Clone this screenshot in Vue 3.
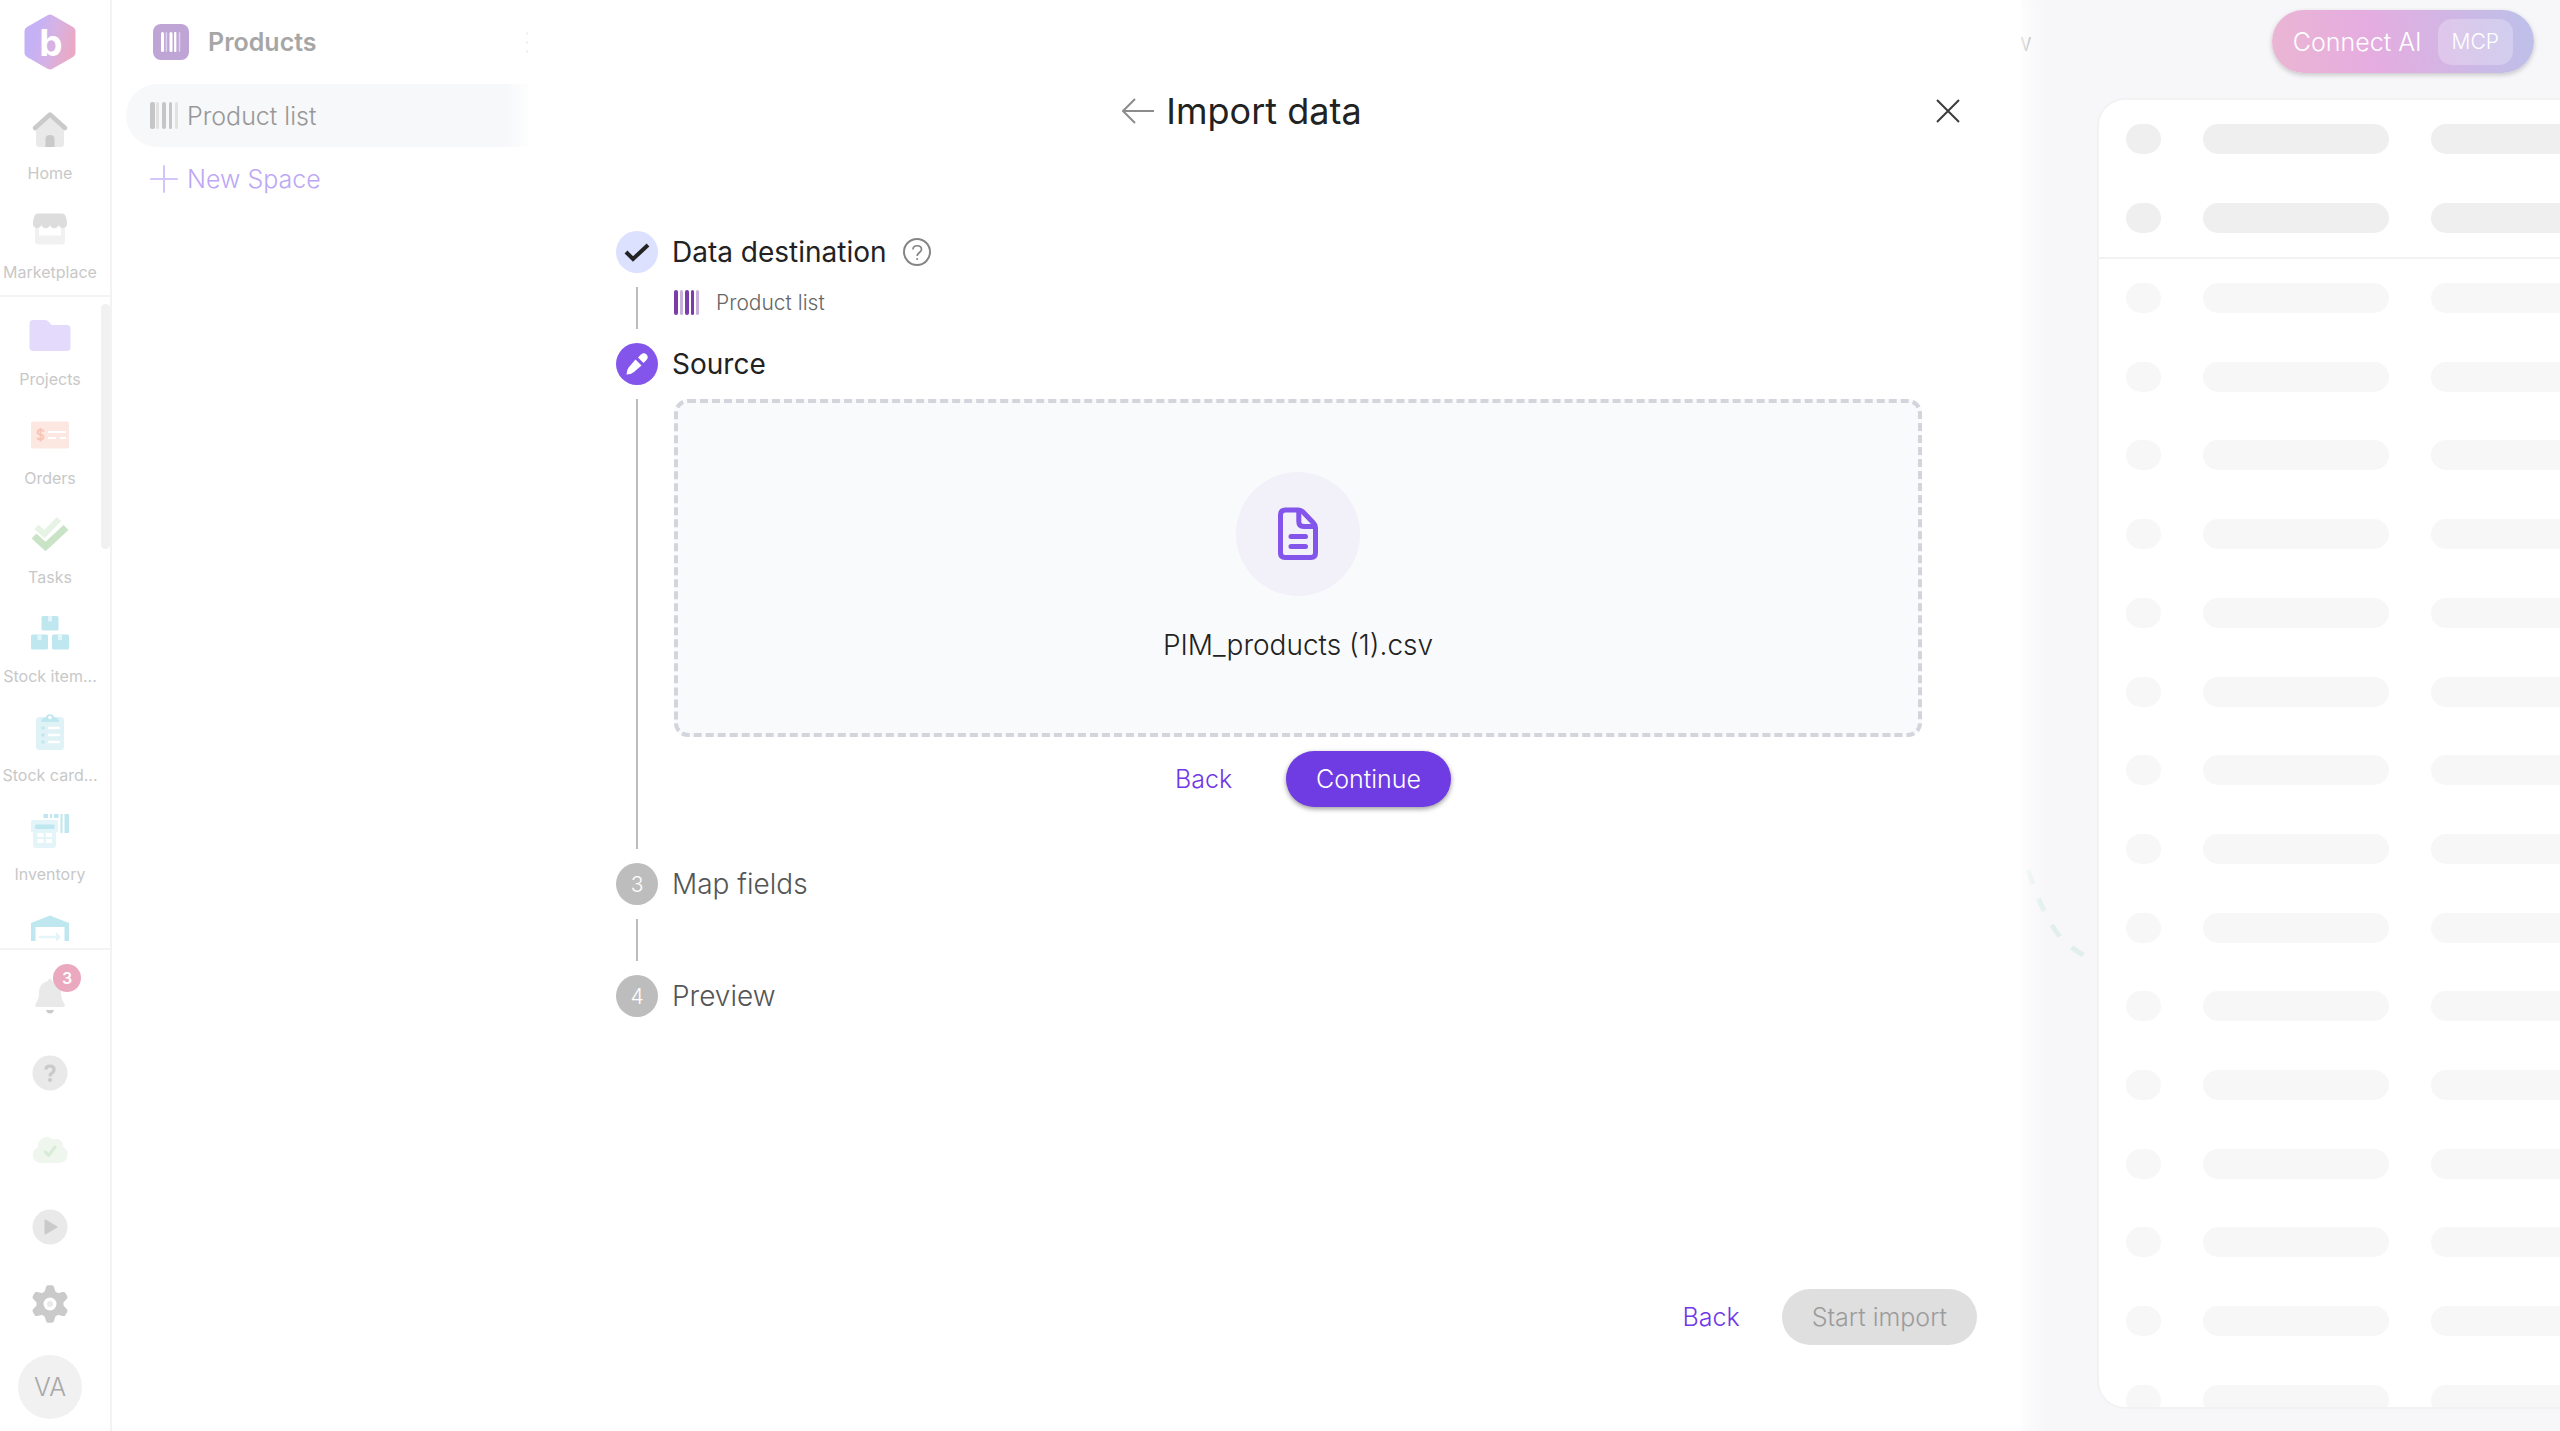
<template>
  <div class="page">
    <!-- App rail -->
    <aside class="rail">
      <a href="#" class="logo" aria-label="Start page">
        <svg width="52" height="56" viewBox="0 0 52 56">
          <defs>
            <linearGradient id="logo-fill" x1="0" y1="0.3" x2="1" y2="0.6">
              <stop offset="0.2" stop-color="#c5b1f6" />
              <stop offset="0.55" stop-color="#d6b2e4" />
              <stop offset="0.95" stop-color="#eaa9c4" />
            </linearGradient>
          </defs>
          <path
            d="M23.500 1.200Q26 -0.300 28.500 1.200L49 13Q51.500 14.500 51.500 17V39Q51.500 41.500 49 43L28.500 54.800Q26 56.300 23.500 54.800L3 43Q0.500 41.500 0.500 39V17Q0.500 14.500 3 13Z"
            fill="url(#logo-fill)"
          />
          <text x="27" y="42" text-anchor="middle" class="logo-letter">b</text>
        </svg>
      </a>

      <nav class="rail-top">
        <a v-for="item in topItems" :key="item.label" href="#" class="rail-item">
          <svg class="rail-icon" viewBox="0 0 44 44" v-html="item.icon"></svg>
          <span class="rail-label">{{ item.label }}</span>
        </a>
      </nav>

      <nav class="rail-scroll">
        <a v-for="(item, index) in appItems" :key="index" href="#" class="rail-item">
          <svg class="rail-icon" viewBox="0 0 44 44" v-html="item.icon"></svg>
          <span v-if="item.label" class="rail-label">{{ item.label }}</span>
        </a>
        <span class="scroll-thumb"></span>
      </nav>

      <div class="rail-bottom">
        <button
          v-for="tool in tools"
          :key="tool.name"
          type="button"
          class="tool"
          :aria-label="tool.name"
        >
          <svg class="rail-icon" viewBox="0 0 44 44" v-html="tool.icon"></svg>
          <span v-if="tool.badge" class="badge">{{ tool.badge }}</span>
        </button>
        <button type="button" class="avatar">VA</button>
      </div>
    </aside>

    <!-- Space panel -->
    <aside class="panel">
      <div class="panel-head">
        <span class="panel-logo">
          <svg width="20" height="20" viewBox="0 0 26 26" fill="#fff">
            <rect x="0" width="4" height="26" rx="2" />
            <rect x="6" width="2" height="26" rx="1" opacity="0.5" />
            <rect x="11" width="4" height="26" rx="2" />
            <rect x="17" width="3" height="26" rx="1" />
            <rect x="23" width="2" height="26" rx="1" opacity="0.5" />
          </svg>
        </span>
        <span class="panel-title">Products</span>
        <button type="button" class="panel-more" aria-label="More">
          <i></i><i></i><i></i>
        </button>
      </div>
      <a href="#" class="space active">
        <svg width="28" height="28" viewBox="0 0 28 28">
          <g fill="#c6c6c6">
            <rect x="0" y="0" width="5" height="27" rx="2" />
            <rect x="12" y="0" width="4" height="27" rx="2" />
            <rect x="19" y="0" width="3" height="27" rx="1.500" />
          </g>
          <g fill="#e2e2e2">
            <rect x="6" y="0" width="3" height="27" rx="1.500" />
            <rect x="25" y="0" width="3" height="27" rx="1.500" />
          </g>
        </svg>
        Product list
      </a>
      <a href="#" class="space add">
        <svg width="28" height="28" viewBox="0 0 28 28">
          <path d="M14 1V27M1 14H27" stroke="#d5c6f9" stroke-width="2" stroke-linecap="round" />
        </svg>
        New Space
      </a>
    </aside>

    <!-- Page behind the dialog -->
    <main class="main">
      <header class="topbar">
        <span class="topbar-tab">w</span>
        <button type="button" class="connect">
          Connect AI
          <span class="connect-tag">MCP</span>
        </button>
      </header>
      <div class="board">
        <svg class="link-line" width="70" height="96" viewBox="0 0 70 96">
          <path
            d="M9 4Q24 50 42 72Q54 84 68 91"
            fill="none"
            stroke="#e1efea"
            stroke-width="5"
            stroke-dasharray="14 16"
          />
        </svg>
        <section class="skeleton">
          <div class="skeleton-head">
            <div v-for="n in 2" :key="n" class="skeleton-row"><i></i><b></b><b></b></div>
          </div>
          <div class="skeleton-body">
            <div v-for="n in 15" :key="n" class="skeleton-row"><i></i><b></b><b></b></div>
          </div>
        </section>
      </div>
    </main>

    <!-- Import dialog -->
    <section class="dialog" role="dialog" aria-labelledby="dialog-title">
      <header class="dialog-head">
        <div class="dialog-heading">
          <button type="button" class="icon-btn" aria-label="Go back">
            <svg width="32" height="26" viewBox="0 0 32 26" fill="none" stroke="#8c8c8c" stroke-width="2">
              <path d="M13 1L1 13L13 25M1 13H32" />
            </svg>
          </button>
          <h1 id="dialog-title">Import data</h1>
        </div>
        <button type="button" class="icon-btn" aria-label="Close">
          <svg width="24" height="24" viewBox="0 0 24 24" stroke="#3c3c3c" stroke-width="2">
            <path d="M1 1L23 23M23 1L1 23" />
          </svg>
        </button>
      </header>

      <ol class="steps">
        <li class="step">
          <span class="marker done">
            <svg width="26" height="20" viewBox="0 0 26 20" fill="none" stroke="#232323" stroke-width="4">
              <path d="M2 10L9 17L24 3" />
            </svg>
          </span>
          <div class="step-title">
            Data destination
            <button type="button" class="icon-btn" aria-label="Help">
              <svg width="28" height="28" viewBox="0 0 28 28" fill="none" stroke="#858585">
                <circle cx="14" cy="14" r="13" stroke-width="2" />
                <path
                  d="M10 11.500C10 6.500 18.500 6.500 18.500 11.500C18.500 14.500 14.200 14.500 14.200 18"
                  stroke-width="1.700"
                />
                <circle cx="14.200" cy="21" r="1" fill="#858585" stroke="none" />
              </svg>
            </button>
          </div>
          <span class="line"></span>
          <div class="step-body destination">
            <svg width="26" height="26" viewBox="0 0 26 26">
              <g fill="#7a3ca8">
                <rect x="0" width="4" height="25" rx="2" />
                <rect x="11" width="4" height="25" rx="2" />
                <rect x="17" width="3" height="25" rx="1.500" />
              </g>
              <g fill="#c9b0dc">
                <rect x="6" width="3" height="25" rx="1.500" />
                <rect x="22" width="3" height="25" rx="1.500" />
              </g>
            </svg>
            Product list
          </div>
        </li>

        <li class="step">
          <span class="marker current">
            <svg width="24" height="24" viewBox="0 0 24 24" fill="#fff">
              <path d="M10.500 7.500L16.500 13.500L9 20Q6 22.500 1.500 22.500Q1.500 18 4 15Z" />
              <path d="M13 5.500L16 2.500Q19 0 21.500 2.500Q24 5 21.500 8L18.500 11Z" />
            </svg>
          </span>
          <div class="step-title">Source</div>
          <span class="line"></span>
          <div class="step-body">
            <div class="dropzone">
              <span class="file-circle">
                <svg width="40" height="54" viewBox="0 0 40 54" fill="none" stroke="#8355ea" stroke-width="5" stroke-linecap="round" stroke-linejoin="round">
                  <path d="M7.500 3H20.500Q23 3 25 5L35.500 16Q37.500 18 37.500 20.500V46Q37.500 50.500 33 50.500H7Q2.500 50.500 2.500 46V8Q2.500 3 7.500 3Z" />
                  <path d="M20.800 3.500V14.500Q20.800 19.500 25.800 19.500H36" />
                  <path d="M13 29.500H27.500M13 39.500H27.500" />
                </svg>
              </span>
              <span class="file-name">PIM_products (1).csv</span>
            </div>
            <div class="step-actions">
              <button type="button" class="btn text">Back</button>
              <button type="button" class="btn primary">Continue</button>
            </div>
          </div>
        </li>

        <li class="step pending">
          <span class="marker">3</span>
          <div class="step-title">Map fields</div>
          <span class="line"></span>
        </li>

        <li class="step pending">
          <span class="marker">4</span>
          <div class="step-title">Preview</div>
        </li>
      </ol>

      <footer class="dialog-foot">
        <button type="button" class="btn text">Back</button>
        <button type="button" class="btn" disabled>Start import</button>
      </footer>
    </section>
  </div>
</template>

<script setup>
// Icons are drawn on a 44 x 44 grid
const topItems = [
  {
    label: 'Home',
    icon: `<path d="M8 20L22 8L36 20V36Q36 39 33 39H11Q8 39 8 36Z" fill="#e9e9e9"/>
      <path d="M7 20L22 6.500L37 20" fill="none" stroke="#cacaca" stroke-width="4.500" stroke-linecap="round" stroke-linejoin="round"/>
      <path d="M17.500 39V31Q17.500 27 22 27Q26.500 27 26.500 31V39Z" fill="#cacaca"/>`,
  },
  {
    label: 'Marketplace',
    icon: `<path d="M7 18H37V34Q37 37.500 34 37.500H10Q7 37.500 7 34ZM11 19V28.500H33V19Z" fill="#f1f1f1" fill-rule="evenodd"/>
      <path d="M10 6.500H34Q37 6.500 38 10Q39 14 39 16A4.300 4.300 0 0 1 30.500 17.500A4.300 4.300 0 0 1 22 17.500A4.300 4.300 0 0 1 13.500 17.500A4.300 4.300 0 0 1 5 16Q5 14 6 10Q7 6.500 10 6.500Z" fill="#dddddd"/>`,
  },
]

const appItems = [
  {
    label: 'Projects',
    icon: `<path d="M5 6H17Q19 6 20.500 7.500L23.500 11H39Q42.500 11 42.500 14.500V33Q42.500 37 39 37H5Q1.500 37 1.500 33V10Q1.500 6 5 6Z" fill="#e4dbfc"/>`,
  },
  {
    label: 'Orders',
    icon: `<rect x="3" y="8.500" width="38" height="27" rx="2" fill="#fde7e1"/>
      <path d="M16 18.500Q15 17 12.500 17Q9.500 17 9.500 19.200Q9.500 21 12.500 21.700Q15.500 22.300 15.500 24.300Q15.500 26.500 12.500 26.500Q10 26.500 9 25M12.500 15V28.500" fill="none" stroke="#f9c4b4" stroke-width="1.800"/>
      <path d="M20 19H38M20 25H28M32 25H38" stroke="#fff" stroke-width="2"/>`,
  },
  {
    label: 'Tasks',
    icon: `<path d="M8.500 15L16.500 22L31 7" fill="none" stroke="#e7f3e5" stroke-width="6" stroke-linejoin="miter"/>
      <path d="M6 24L17.500 34.500L38 15.500" fill="none" stroke="#c8e3c6" stroke-width="7"/>`,
  },
  {
    label: 'Stock item...',
    icon: `<g fill="#bfe7ef"><rect x="13.500" y="5" width="17" height="14.500" rx="1.500"/><rect x="3" y="23.500" width="17" height="15" rx="1.500"/><rect x="24" y="23.500" width="17" height="15" rx="1.500"/></g>
      <g fill="#e4f5f9"><rect x="20" y="5" width="4" height="5.500"/><rect x="9.500" y="23.500" width="4" height="5.500"/><rect x="30" y="23.500" width="4" height="5.500"/></g>`,
  },
  {
    label: 'Stock card...',
    icon: `<rect x="8" y="7" width="28" height="33" rx="3.500" fill="#dff2f6"/>
      <path d="M13 12Q13 8 17.500 7.500A4.700 4.700 0 0 1 26.500 7.500Q31 8 31 12Z" fill="#bfe7ef"/>
      <circle cx="22" cy="7.500" r="1.800" fill="#fff"/>
      <g fill="#bfe7ef"><circle cx="15" cy="18" r="1.700"/><circle cx="15" cy="25" r="1.700"/><circle cx="15" cy="32" r="1.700"/></g>
      <path d="M21 18H31M21 25H31M21 32H31" stroke="#fff" stroke-width="2.400" stroke-linecap="round"/>`,
  },
  {
    label: 'Inventory',
    icon: `<path d="M5 11H28Q30 11 30 13V23H28V36Q28 39 25 39H8Q5 39 5 36V23H3V13Q3 11 5 11Z" fill="#e4f5f9"/>
      <rect x="7" y="15.500" width="19.500" height="4.500" rx="1" fill="#bfe7ef"/>
      <g fill="#fff"><rect x="9.500" y="24" width="6" height="4"/><rect x="18" y="24" width="6" height="4"/><rect x="9.500" y="30" width="6" height="4"/><rect x="18" y="30" width="6" height="4"/></g>
      <g fill="#bfe7ef"><rect x="15.500" y="5" width="4.500" height="4"/><rect x="22" y="5" width="2" height="4"/><rect x="26" y="5" width="4.500" height="4"/><rect x="32.500" y="5" width="2" height="19"/><rect x="36.500" y="5" width="4.500" height="19"/></g>`,
  },
  {
    label: '',
    icon: `<path d="M3 40V15L22 7.500L41 15V40H36.500V19H7.500V40Z" fill="#bfe7ef"/>
      <path d="M11 29H30" stroke="#e4f5f9" stroke-width="2.500"/><path d="M28 24L33 29L28 34Z" fill="#e4f5f9"/>`,
  },
]

const tools = [
  {
    name: 'Notifications',
    badge: 3,
    icon: `<path d="M22 4.500Q24 4.500 24 7Q33 9 33 19Q33 25 36.500 30Q37.500 33 35 33H9Q6.500 33 7.500 30Q11 25 11 19Q11 9 20 7Q20 4.500 22 4.500Z" fill="#e9e9e9"/>
      <path d="M18 36H26Q25 39.500 22 39.500Q19 39.500 18 36Z" fill="#cacaca"/>`,
  },
  {
    name: 'Help',
    icon: `<circle cx="22" cy="22" r="17.500" fill="#e9e9e9"/>
      <path d="M18 18.500Q18 15 22 15Q26 15 26 18.500Q26 21 22.300 23.500V25.500" fill="none" stroke="#cacaca" stroke-width="3.200"/>
      <circle cx="22" cy="29" r="2" fill="#cacaca"/>`,
  },
  {
    name: 'Sync',
    icon: `<path d="M12 35A8 8 0 0 1 10 19.500A9 9 0 0 1 25 11.500A7 7 0 0 1 35 19A8.500 8.500 0 0 1 32 35Z" fill="#eef6ed"/>
      <path d="M17.500 24L20.500 27.500L27 19" fill="none" stroke="#d8ebd6" stroke-width="3" stroke-linecap="round" stroke-linejoin="round"/>`,
  },
  {
    name: 'Tutorials',
    icon: `<circle cx="22" cy="22" r="17.500" fill="#e9e9e9"/>
      <path d="M17.500 15.500L28.500 22L17.500 28.500Z" fill="#cacaca" stroke="#cacaca" stroke-width="2" stroke-linejoin="round"/>`,
  },
  {
    name: 'Settings',
    icon: `<g fill="#cacaca"><circle cx="22" cy="22" r="13.500"/><path id="cog" d="M16.500 10L18 5Q18.500 3.200 20 3.200H24Q25.500 3.200 26 5L27.500 10V34L26 39Q25.500 40.800 24 40.800H20Q18.500 40.800 18 39L16.500 34Z"/><use href="#cog" transform="rotate(60 22 22)"/><use href="#cog" transform="rotate(120 22 22)"/></g>
      <circle cx="22" cy="22" r="6.500" fill="#fff"/><circle cx="22" cy="22" r="3" fill="#e9e9e9"/>`,
  },
]
</script>

<style>
body {
  margin: 0;
  background: #fff;
}
</style>

<style scoped>
.page {
  position: relative;
  display: flex;
  height: 100vh;
  overflow: hidden;
  font-family: Inter, 'Liberation Sans', sans-serif;
  font-weight: 300;
  color: #222;
}

.page *,
.page *::before {
  box-sizing: border-box;
}

button {
  padding: 0;
  border: none;
  background: none;
  font: inherit;
  color: inherit;
}

a {
  color: inherit;
  text-decoration: none;
}

/* Rail */
.rail {
  display: flex;
  flex: none;
  flex-direction: column;
  width: 112px;
  border-right: 2px solid #f3f3f3;
}

.logo {
  height: 95px;
  padding: 14px 0 0 24px;
}

.logo-letter {
  font-size: 37px;
  font-weight: 700;
  fill: #fff;
}

.rail-top {
  padding-bottom: 2px;
  border-bottom: 2px solid #f3f3f3;
}

.rail-item {
  display: flex;
  flex: none;
  flex-direction: column;
  align-items: center;
  gap: 9px;
  width: 100px;
  height: 99px;
  padding-top: 13px;
}

.rail-icon {
  flex: none;
  width: 44px;
  height: 44px;
}

.rail-label {
  font-size: 16px;
  font-weight: 400;
  line-height: 24px;
  white-space: nowrap;
  color: #c8c8c8;
}

.rail-scroll {
  position: relative;
  flex: 1;
  min-height: 0;
  margin-bottom: 7px;
  padding-top: 4px;
  overflow: hidden;
}

.scroll-thumb {
  position: absolute;
  top: 7px;
  right: 0;
  width: 9px;
  height: 245px;
  border-radius: 5px;
  background: #f1f1f1;
}

.rail-bottom {
  display: flex;
  flex: none;
  flex-direction: column;
  padding: 7px 0 12px;
  border-top: 2px solid #f3f3f3;
}

.tool {
  position: relative;
  display: flex;
  align-items: center;
  justify-content: center;
  width: 100px;
  height: 77px;
}

.badge {
  position: absolute;
  top: 7px;
  left: 53px;
  width: 28px;
  height: 28px;
  border-radius: 50%;
  background: #eaa9bf;
  font-size: 16px;
  font-weight: 600;
  line-height: 28px;
  text-align: center;
  color: #fff;
}

.avatar {
  width: 64px;
  height: 64px;
  margin: 13px 0 0 18px;
  border-radius: 50%;
  background: #f1f1f1;
  font-size: 25px;
  color: #a8a8a8;
}

/* Space panel */
.panel {
  flex: none;
  width: 422px;
}

.panel-head {
  display: flex;
  align-items: center;
  height: 84px;
  padding-left: 41px;
}

.panel-logo {
  display: flex;
  align-items: center;
  justify-content: center;
  width: 36px;
  height: 36px;
  border-radius: 8px;
  background: #bfa4d6;
}

.panel-title {
  flex: 1;
  padding-left: 19px;
  font-size: 25px;
  font-weight: 600;
  color: #a6a6a6;
}

.panel-more {
  display: flex;
  flex-direction: column;
  gap: 6px;
  width: 8px;
}

.panel-more i {
  width: 3px;
  height: 3px;
  border-radius: 50%;
  background: #ccc;
}

.space {
  display: flex;
  align-items: center;
  gap: 9px;
  height: 63px;
  margin-left: 14px;
  padding-left: 24px;
  border-radius: 32px 0 0 32px;
  font-size: 25px;
  color: #979797;
}

.space.active {
  background: #f7f8fa;
}

.space.add {
  color: #bda8f6;
}

/* Background page */
.main {
  display: flex;
  flex: 1;
  flex-direction: column;
  min-width: 0;
  background: #f7f7fa;
}

.topbar {
  display: flex;
  align-items: center;
  justify-content: flex-end;
  gap: 240px;
  padding: 10px 26px 25px 0;
}

.topbar-tab {
  font-size: 25px;
  color: #999;
}

.connect {
  display: flex;
  align-items: center;
  gap: 16px;
  height: 63px;
  padding: 0 21px;
  border-radius: 32px;
  background: linear-gradient(80deg, #ebb6d3, #e5ace0 38%, #bfbfe9 95%);
  box-shadow: 0 2px 5px rgba(0, 0, 0, 0.2);
  font-size: 25px;
  color: #fff;
}

.connect-tag {
  padding: 0 14px;
  border-radius: 14px;
  background: rgba(255, 255, 255, 0.25);
  font-size: 21px;
  line-height: 46px;
}

.board {
  display: flex;
  flex: 1;
  justify-content: flex-end;
  min-height: 0;
  padding-bottom: 22px;
}

.link-line {
  align-self: center;
  margin: 321px 8px 0 0;
}

.skeleton {
  display: flex;
  flex: none;
  flex-direction: column;
  width: 463px;
  border: 2px solid #f2f2f2;
  border-right: none;
  border-radius: 28px 0 0 28px;
  background: #fff;
  overflow: hidden;
}

.skeleton-head {
  display: flex;
  flex-direction: column;
  gap: 49px;
  padding: 24px 0 24px 27px;
  border-bottom: 2px solid #f2f2f2;
}

.skeleton-body {
  display: flex;
  flex: 1;
  flex-direction: column;
  justify-content: space-between;
  margin-bottom: -8px;
  padding: 24px 0 0 27px;
}

.skeleton-row {
  display: flex;
  gap: 42px;
}

.skeleton-row i,
.skeleton-row b {
  flex: none;
  width: 35px;
  height: 30px;
  border-radius: 15px;
  background: #f7f7f7;
}

.skeleton-row b {
  width: 186px;
}

.skeleton-head i,
.skeleton-head b {
  background: #efefef;
}

/* Dialog */
.dialog {
  position: absolute;
  top: 0;
  right: 539px;
  bottom: 0;
  left: 528px;
  display: flex;
  flex-direction: column;
  background: #fff;
  box-shadow: 0 0 24px 8px #fff;
}

.dialog-head {
  display: flex;
  align-items: center;
  padding: 86px 61px 0 20px;
}

.dialog-heading {
  display: flex;
  flex: 1;
  align-items: center;
  justify-content: center;
  gap: 12px;
}

.dialog-heading h1 {
  margin: 0;
  font-size: 36px;
  font-weight: 400;
  line-height: 50px;
}

.icon-btn {
  display: flex;
}

.steps {
  display: flex;
  flex: 1;
  flex-direction: column;
  margin: 0;
  padding: 95px 99px 0 88px;
  list-style: none;
}

.step {
  display: grid;
  grid-template-columns: 42px 1fr;
  column-gap: 14px;
}

.marker {
  display: flex;
  align-items: center;
  justify-content: center;
  height: 42px;
  border-radius: 50%;
  background: #bdbdbd;
  font-size: 21px;
  color: #fff;
}

.marker.done {
  background: #dbe1ff;
}

.marker.current {
  background: #8355ea;
}

.step-title {
  display: flex;
  align-items: center;
  gap: 16px;
  font-size: 28px;
  font-weight: 400;
  line-height: 44px;
}

.pending .step-title {
  font-weight: 300;
  color: #555;
}

.marker,
.step-title {
  height: 42px;
}

.line {
  justify-self: center;
  width: 2px;
  min-height: 42px;
  margin: 14px 0;
  background: #bdbdbd;
}

.step-body {
  margin: 14px 0 14px 2px;
}

.destination {
  display: flex;
  align-items: center;
  align-self: start;
  gap: 16px;
  font-size: 21px;
  line-height: 32px;
  color: #666;
}

.dropzone {
  display: flex;
  flex-direction: column;
  align-items: center;
  gap: 29px;
  padding: 69px 0 68px;
  border: 4px dashed #d3d4dc;
  border-radius: 14px;
  background: #f9fafc;
}

.file-circle {
  display: flex;
  align-items: center;
  justify-content: center;
  width: 124px;
  height: 124px;
  border-radius: 50%;
  background: #f2f0f9;
}

.file-name {
  font-size: 28px;
  line-height: 40px;
}

.step-actions {
  display: flex;
  justify-content: center;
  gap: 24px;
  padding: 14px 0 42px;
}

.btn {
  height: 56px;
  padding: 0 30px;
  border-radius: 28px;
  font-size: 25px;
}

.btn.text {
  color: #7038e6;
}

.btn.primary {
  background: #6f3be3;
  box-shadow: 0 2px 5px rgba(0, 0, 0, 0.4);
  color: #fff;
}

.btn:disabled {
  background: #dfdfdf;
  color: #9c9c9c;
}

.dialog-foot {
  display: flex;
  justify-content: flex-end;
  gap: 12px;
  padding: 0 44px 86px;
}
</style>
